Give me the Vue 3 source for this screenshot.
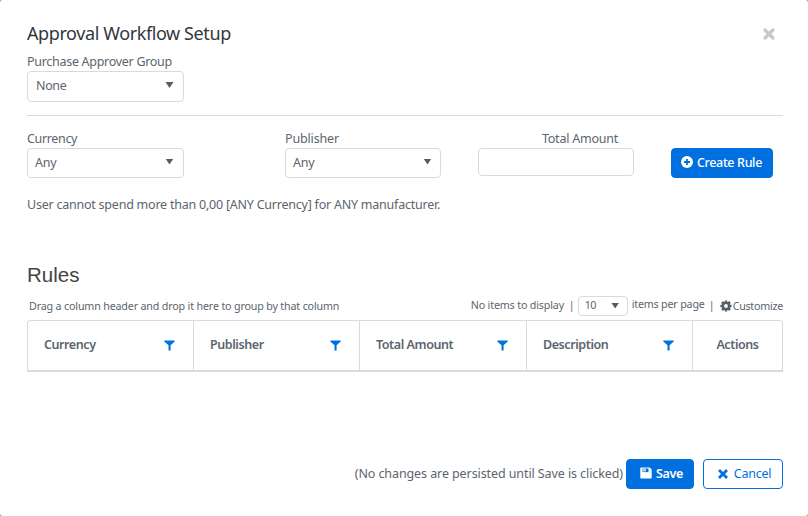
<script setup>
const columns = ['Currency', 'Publisher', 'Total Amount', 'Description']
</script>

<template>
  <main class="dialog">
    <header class="head">
      <h1>Approval Workflow Setup</h1>
      <button class="close" aria-label="Close">
        <svg width="14" height="14" viewBox="0 0 14 14"><path d="M3 3l8 8M11 3l-8 8" stroke="#c4cacf" stroke-width="3.3" stroke-linecap="round" /></svg>
      </button>
    </header>

    <section class="group">
      <label class="group-label">Purchase Approver Group</label>
      <div class="select tall">None<i class="caret"></i></div>
    </section>

    <section class="form">
      <div class="field currency">
        <label>Currency</label>
        <div class="select">Any<i class="caret"></i></div>
      </div>
      <div class="field publisher">
        <label>Publisher</label>
        <div class="select">Any<i class="caret"></i></div>
      </div>
      <div class="field amount">
        <label>Total Amount</label>
        <input type="text" aria-label="Total Amount" />
      </div>
      <button class="btn primary create">
        <svg width="12" height="12" viewBox="0 0 12 12"><circle cx="6" cy="6" r="6" fill="#fff" /><path d="M6 3v6M3 6h6" stroke="#0070e0" stroke-width="1.8" /></svg>
        <span>Create Rule</span>
      </button>
    </section>

    <p class="summary">User cannot spend more than 0,00 [ANY Currency] for ANY manufacturer.</p>

    <h2>Rules</h2>
    <div class="toolbar">
      <span class="hint">Drag a column header and drop it here to group by that column</span>
      <span class="none">No items to display</span>
      <span class="bar first">|</span>
      <div class="select mini">10<i class="caret"></i></div>
      <span class="per">items per page</span>
      <span class="bar second">|</span>
      <svg class="gear" width="12" height="12" viewBox="0 0 12 12">
        <g stroke="#555e66" stroke-width="2.5"><path d="M6 .4v11.2M.4 6h11.2M2 2l8 8M10 2l-8 8" /></g>
        <circle cx="6" cy="6" r="3.1" fill="#fff" stroke="#555e66" stroke-width="2.4" />
      </svg>
      <span class="customize">Customize</span>
    </div>

    <div class="table">
      <div v-for="name in columns" :key="name" class="cell">
        <span>{{ name }}</span>
        <svg width="11" height="11" viewBox="0 0 11 11"><path d="M.3.4h10.4v1L6.6 5.2v5.3H4.5V5.2L.3 1.4z" fill="#0070e0" /></svg>
      </div>
      <div class="cell actions"><span>Actions</span></div>
    </div>

    <footer class="foot">
      <span class="note">(No changes are persisted until Save is clicked)</span>
      <button class="btn primary save">
        <svg width="12" height="12" viewBox="0 0 12 12"><path d="M1 .5h8.7l2 2v8.3a.8.8 0 0 1-.8.7H1a.7.7 0 0 1-.7-.7V1.2A.7.7 0 0 1 1 .5z" fill="#fff" /><path d="M2.5 1.5h6v3.6h-6z" fill="#0070e0" /><path d="M3 1.5h3v3H3z" fill="#b5d5f7" /></svg>
        <span>Save</span>
      </button>
      <button class="btn outline">
        <svg width="10" height="10" viewBox="0 0 10 10"><path d="M2 2l6 6M8 2L2 8" stroke="#0070e0" stroke-width="2.8" stroke-linecap="square" /></svg>
        <span>Cancel</span>
      </button>
    </footer>
  </main>
</template>

<style>
body { margin: 0; background: #a5a5a5; }
</style>

<style scoped>
* { box-sizing: border-box; }
.dialog {
  height: 516px;
  padding: 22px 25px 0 27px;
  border-radius: 3px;
  background: #fff;
  color: #5c646e;
  font: 12.5px/17px "Noto Sans", sans-serif;
  letter-spacing: -0.23px;
  overflow: hidden;
  white-space: nowrap;
}
.head { display: flex; justify-content: space-between; align-items: center; height: 24px; }
h1 { margin: 0; padding-bottom: 1px; color: #32373c; font-size: 18px; font-weight: 400; line-height: 23px; letter-spacing: -0.4px; }
button { font: inherit; letter-spacing: inherit; }
.close { display: flex; padding: 0; margin-right: 7px; border: 0; background: none; }
.group { height: 70px; padding-top: 7px; border-bottom: 1px solid #d8dadd; }
label { display: block; height: 18px; line-height: 18px; }
.group-label { letter-spacing: -0.29px; }
.select {
  display: flex;
  align-items: center;
  justify-content: space-between;
  width: 157px;
  height: 30px;
  padding: 0 9px 2px 7px;
  border: 1px solid #d5dbe0;
  border-radius: 4px;
}
.tall { height: 31px; padding-left: 8px; letter-spacing: -0.35px; }
.caret { width: 9px; height: 6px; background: #555e66; clip-path: polygon(5% 0, 95% 0, 50% 100%); margin-top: -1px; }
.form { display: flex; padding-top: 14px; }
.publisher { margin-left: 101px; }
.publisher .select { width: 156px; padding-right: 8px; }
.amount { margin-left: 37px; width: 156px; }
.amount label { padding-right: 16px; text-align: right; }
.currency label { letter-spacing: -0.35px; }
.publisher label { letter-spacing: -0.15px; }
input { display: block; width: 156px; height: 28px; border: 1px solid #d5dbe0; border-radius: 4px; }
.btn { display: flex; align-items: center; justify-content: center; height: 30px; padding: 0 0 2px; border: 1px solid #0070e0; border-radius: 4px; }
.primary { background: #0070e0; color: #fff; font-weight: 500; }
.create { width: 102px; margin: 18px 0 0 37px; gap: 4px; padding-right: 1px; letter-spacing: -0.35px; }
.summary { margin: 18px 0 0; height: 18px; line-height: 18px; }
h2 { margin: 49px 0 0; height: 24px; color: #444; font: 400 20.5px/24px "Liberation Sans", sans-serif; letter-spacing: 0; }
.toolbar { display: flex; align-items: center; height: 20px; margin-top: 9px; padding-left: 2px; font-size: 10.7px; letter-spacing: -0.16px; }
.hint { width: 442px; padding-top: 1px; }
.none { width: 94px; padding-bottom: 1px; }
.bar { width: 3px; padding-bottom: 1px; }
.first { margin-left: 4px; }
.mini { width: 50px; height: 20px; margin-left: 6px; padding: 0 7px 1px 6px; letter-spacing: -0.5px; }
.mini .caret { margin-top: 0; }
.per { width: 73px; margin-left: 4px; padding-bottom: 3px; letter-spacing: -0.18px; }
.second { margin-left: 4px; padding-bottom: 2px; }
.gear { margin-left: 8px; }
.customize { margin-left: 1px; padding-top: 1px; letter-spacing: -0.25px; }
.table {
  display: grid;
  grid-template-columns: 165px 166px 167px 166px 90px;
  height: 52px;
  margin-top: 4px;
  border: 1px solid #d5dbe0;
  border-bottom-width: 2px;
  border-radius: 4px 4px 0 0;
  font-weight: 600;
  letter-spacing: -0.42px;
}
.cell { display: flex; align-items: center; justify-content: space-between; padding: 0 18px 3px 16px; }
.cell + .cell { border-left: 1px solid #d5dbe0; }
.cell svg { margin-top: 2px; }
.actions { justify-content: center; padding: 0 0 3px; }
.foot { display: flex; align-items: center; justify-content: flex-end; margin-top: 87px; }
.note { margin-right: 3px; padding-bottom: 2px; letter-spacing: -0.09px; }
.save { width: 68px; margin-right: 9px; gap: 4px; padding-left: 3px; font-weight: 600; letter-spacing: -0.35px; }
.outline { width: 80px; gap: 6px; padding-left: 3px; background: #fff; color: #0070e0; }
.outline svg { margin-top: 2px; }
</style>
